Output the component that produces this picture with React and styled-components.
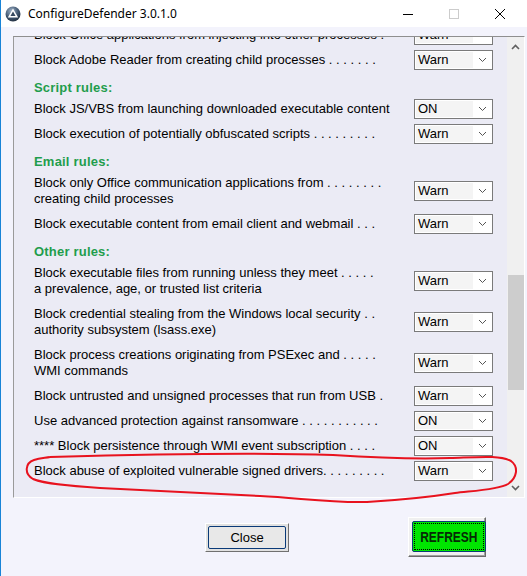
import React, { useLayoutEffect, useRef } from 'react';
import styled, { createGlobalStyle } from 'styled-components';

const GlobalStyle = createGlobalStyle`
  html, body { margin: 0; padding: 0; }
  body {
    background: #f3f3fc;
    font-family: "Liberation Sans", Arial, sans-serif;
    color: #000;
  }
`;

const rules = [
  { heading: 'Office rules:' },
  { lines: ['Block all Office applications from creating child processes . .'], value: 'Warn' },
  { lines: ['Block Office applications from creating executable content . . .'], value: 'Warn' },
  { lines: ['Block Office applications from injecting into other processes .'], value: 'Warn', anchor: true },
  { lines: ['Block Adobe Reader from creating child processes . . . . . . .'], value: 'Warn' },
  { heading: 'Script rules:' },
  { lines: ['Block JS/VBS from launching downloaded executable content'], value: 'ON' },
  { lines: ['Block execution of potentially obfuscated scripts . . . . . . . . .'], value: 'Warn' },
  { heading: 'Email rules:' },
  { lines: ['Block only Office communication applications from . . . . . . . .', 'creating child processes'], value: 'Warn' },
  { lines: ['Block executable content from email client and webmail . . .'], value: 'Warn' },
  { heading: 'Other rules:' },
  { lines: ['Block executable files from running unless they meet . . . . .', 'a prevalence, age, or trusted list criteria'], value: 'Warn' },
  { lines: ['Block credential stealing from the Windows local security . .', 'authority subsystem (lsass.exe)'], value: 'Warn' },
  { lines: ['Block process creations originating from PSExec and . . . . .', 'WMI commands'], value: 'Warn' },
  { lines: ['Block untrusted and unsigned processes that run from USB .'], value: 'Warn' },
  { lines: ['Use advanced protection against ransomware . . . . . . . . . . .'], value: 'ON' },
  { lines: ['**** Block persistence through WMI event subscription . . . .'], value: 'ON' },
  { lines: ['Block abuse of exploited vulnerable signed drivers. . . . . . . . .'], value: 'Warn' },
];

function AppIcon() {
  return (
    <svg width="16" height="16" viewBox="0 0 16 16">
      <defs>
        <radialGradient id="ring" cx="40%" cy="30%" r="75%">
          <stop offset="0" stopColor="#9fb3c8" />
          <stop offset="0.6" stopColor="#3f556f" />
          <stop offset="1" stopColor="#1f2c3c" />
        </radialGradient>
      </defs>
      <circle cx="8" cy="8" r="7.5" fill="url(#ring)" />
      <path d="M8 2.6 L13.2 11.6 H2.8 Z" fill="#fff" />
      <path d="M8 5.6 L10.6 10.1 H5.4 Z" fill="#34475e" />
    </svg>
  );
}

function Chevron({ up }) {
  return (
    <svg width="9" height="6" viewBox="0 0 9 6">
      <polyline
        points={up ? '1,5 4.5,1.5 8,5' : '1,1 4.5,4.5 8,1'}
        fill="none"
        stroke={up ? '#606060' : '#555'}
        strokeWidth={up ? 1.6 : 1}
      />
    </svg>
  );
}

function Dropdown({ value }) {
  return (
    <Select>
      <SelectValue>{value}</SelectValue>
      <SelectArrow>
        <Chevron />
      </SelectArrow>
    </Select>
  );
}

function App() {
  const panelRef = useRef(null);
  const anchorRef = useRef(null);

  useLayoutEffect(() => {
    // the half-hidden row sits 15px above the top edge of the list
    if (panelRef.current && anchorRef.current) {
      panelRef.current.scrollTop = anchorRef.current.offsetTop + 15;
    }
  }, []);

  return (
    <>
      <GlobalStyle />
      <Window>
        <TitleBar>
          <IconSlot><AppIcon /></IconSlot>
          <Title>ConfigureDefender 3.0.1.0</Title>
          <CaptionButton>
            <svg width="12" height="12" viewBox="0 0 12 12"><line x1="1" y1="6.5" x2="11" y2="6.5" stroke="#000" /></svg>
          </CaptionButton>
          <CaptionButton>
            <svg width="12" height="12" viewBox="0 0 12 12"><rect x="1.5" y="1.5" width="9" height="9" fill="none" stroke="#cccccc" /></svg>
          </CaptionButton>
          <CaptionButton>
            <svg width="12" height="12" viewBox="0 0 12 12"><path d="M1 1 L11 11 M11 1 L1 11" stroke="#000" strokeWidth="1" /></svg>
          </CaptionButton>
        </TitleBar>

        <Client>
          <Panel>
            <List ref={panelRef}>
              {rules.map((r, i) =>
                r.heading ? (
                  <Heading key={i}>{r.heading}</Heading>
                ) : (
                  <Row key={i} $lines={r.lines.length} ref={r.anchor ? anchorRef : null}>
                    <Label>
                      {r.lines.map((l, j) => <div key={j}>{l}</div>)}
                    </Label>
                    <Dropdown value={r.value} />
                  </Row>
                )
              )}
              <Spacer />
            </List>
            <Scrollbar>
              <ArrowBox><Chevron up /></ArrowBox>
              <Track>
                <Thumb $top={219} $size={115} />
              </Track>
              <ArrowBox><DownGlyph><Chevron up /></DownGlyph></ArrowBox>
            </Scrollbar>
          </Panel>

          <Footer>
            <CloseButton>
              <CloseFace>Close</CloseFace>
            </CloseButton>
            <RefreshButton>
              <RefreshFace><RefreshText>REFRESH</RefreshText></RefreshFace>
            </RefreshButton>
          </Footer>
        </Client>

        <Annotation width="527" height="576" viewBox="0 0 527 576">
          <path
            d="M50 457 C120 455 250 452 333 455 C380 458 420 459 450 458 C480 457 500 455 511 461
               C519 467 517 478 508 484 C498 490 470 491 455 493 C430 497 400 500 367 502
               C330 503 300 498 260 496 C200 493 140 490 100 488 C70 486 45 484 33 479
               C24 474 25 463 34 460 C40 458 45 458 50 457"
            fill="none"
            stroke="#e8121e"
            strokeWidth="2"
            strokeLinejoin="round"
          />
        </Annotation>
      </Window>
    </>
  );
}

const Window = styled.div`
  position: relative;
  width: 527px;
  height: 576px;
  overflow: hidden;
  background: #f3f3fc;
  border-left: 1px solid #1883d7;
  box-sizing: border-box;
  display: flex;
  flex-direction: column;
`;

const TitleBar = styled.div`
  height: 27px;
  background: #fff;
  display: flex;
  align-items: center;
  padding-right: 4px;
  flex-shrink: 0;
`;

const IconSlot = styled.div`
  width: 16px;
  height: 16px;
  margin: 0 7px 0 4px;
  display: flex;
`;

const Title = styled.div`
  flex: 1;
  font-family: "Noto Sans", "Open Sans", sans-serif;
  font-size: 12px;
  color: #000;
  padding-bottom: 1px;
`;

const CaptionButton = styled.div`
  width: 46px;
  height: 27px;
  display: flex;
  align-items: center;
  justify-content: center;
`;

const Client = styled.div`
  flex: 1;
  display: flex;
  flex-direction: column;
  padding: 9px 2px 0 12px;
`;

const Panel = styled.div`
  height: 462px;
  display: flex;
  box-sizing: border-box;
  border-top: 1px solid #8f8f8f;
  border-left: 1px solid #9a9a9a;
  border-right: 1px solid #fff;
  border-bottom: 1px solid #fff;
  background: #ebebf5;
`;

const List = styled.div`
  position: relative;
  flex: 1;
  overflow: hidden;
  padding: 0 14px 0 20px;
`;

const Row = styled.div`
  height: ${p => (p.$lines > 1 ? 41 : 25)}px;
  display: grid;
  grid-template-columns: 380px 79px;
  align-items: center;
`;

const Label = styled.div`
  font-size: 13px;
  line-height: 16px;
  white-space: nowrap;
`;

const Heading = styled.div`
  height: 17px;
  margin-top: 7px;
  display: flex;
  align-items: center;
  color: #1f9d4c;
  font-weight: bold;
  font-size: 13px;
  letter-spacing: 0.2px;
`;

const Spacer = styled.div`
  height: 60px;
`;

const Select = styled.div`
  height: 20px;
  box-sizing: border-box;
  border: 1px solid #7a7a7a;
  background: #fff;
  display: flex;
  align-items: stretch;
`;

const SelectValue = styled.div`
  flex: 1;
  margin: 1px 0 1px 1px;
  padding-left: 2px;
  background: #f4f4f4;
  font-size: 13px;
  line-height: 16px;
  color: #000;
`;

const SelectArrow = styled.div`
  width: 19px;
  display: flex;
  align-items: center;
  justify-content: center;
`;

const Scrollbar = styled.div`
  width: 17px;
  background: #f0f0f0;
  display: flex;
  flex-direction: column;
`;

const ArrowBox = styled.div`
  height: 19px;
  display: flex;
  align-items: center;
  justify-content: center;
`;

const DownGlyph = styled.div`
  display: flex;
  transform: rotate(180deg);
`;

const Track = styled.div`
  flex: 1;
  position: relative;
`;

const Thumb = styled.div`
  position: absolute;
  left: 1px;
  right: 0;
  top: ${p => p.$top}px;
  height: ${p => p.$size}px;
  background: #cdcdcd;
`;

const Footer = styled.div`
  height: 78px;
  display: flex;
  align-items: center;
  padding-left: 192px;
  gap: 119px;
`;

const CloseButton = styled.div`
  width: 84px;
  height: 29px;
  box-sizing: border-box;
  border: 1px solid;
  border-color: #fff #707070 #707070 #fff;
  padding: 2px;
  background: #e1e1e1;
  display: flex;
`;

const CloseFace = styled.div`
  flex: 1;
  border: 1px solid #0a3a78;
  border-radius: 2px;
  background: #e8e8e8;
  display: flex;
  align-items: center;
  justify-content: center;
  font-size: 13px;
`;

const RefreshButton = styled.div`
  width: 78px;
  height: 40px;
  box-sizing: border-box;
  border: 1px solid;
  border-color: #fff #6a6a6a #6a6a6a #fff;
  box-shadow: inset -1px -1px 0 #a0a0a0;
  background: #f0f0f0;
  padding: 3px 4px 4px 3px;
  display: flex;
`;

const RefreshFace = styled.div`
  flex: 1;
  border: 1px solid #0a3a78;
  border-radius: 2px;
  background: #00e600;
  outline: 1px dotted #000;
  outline-offset: -3px;
  display: flex;
  align-items: center;
  justify-content: center;
`;

const RefreshText = styled.span`
  display: inline-block;
  font-family: "Liberation Sans", Arial, sans-serif;
  font-weight: bold;
  font-size: 15px;
  color: #062a06;
  transform: scaleX(0.8);
`;

const Annotation = styled.svg`
  position: absolute;
  left: -1px;
  top: 0;
  pointer-events: none;
`;

export default App;
